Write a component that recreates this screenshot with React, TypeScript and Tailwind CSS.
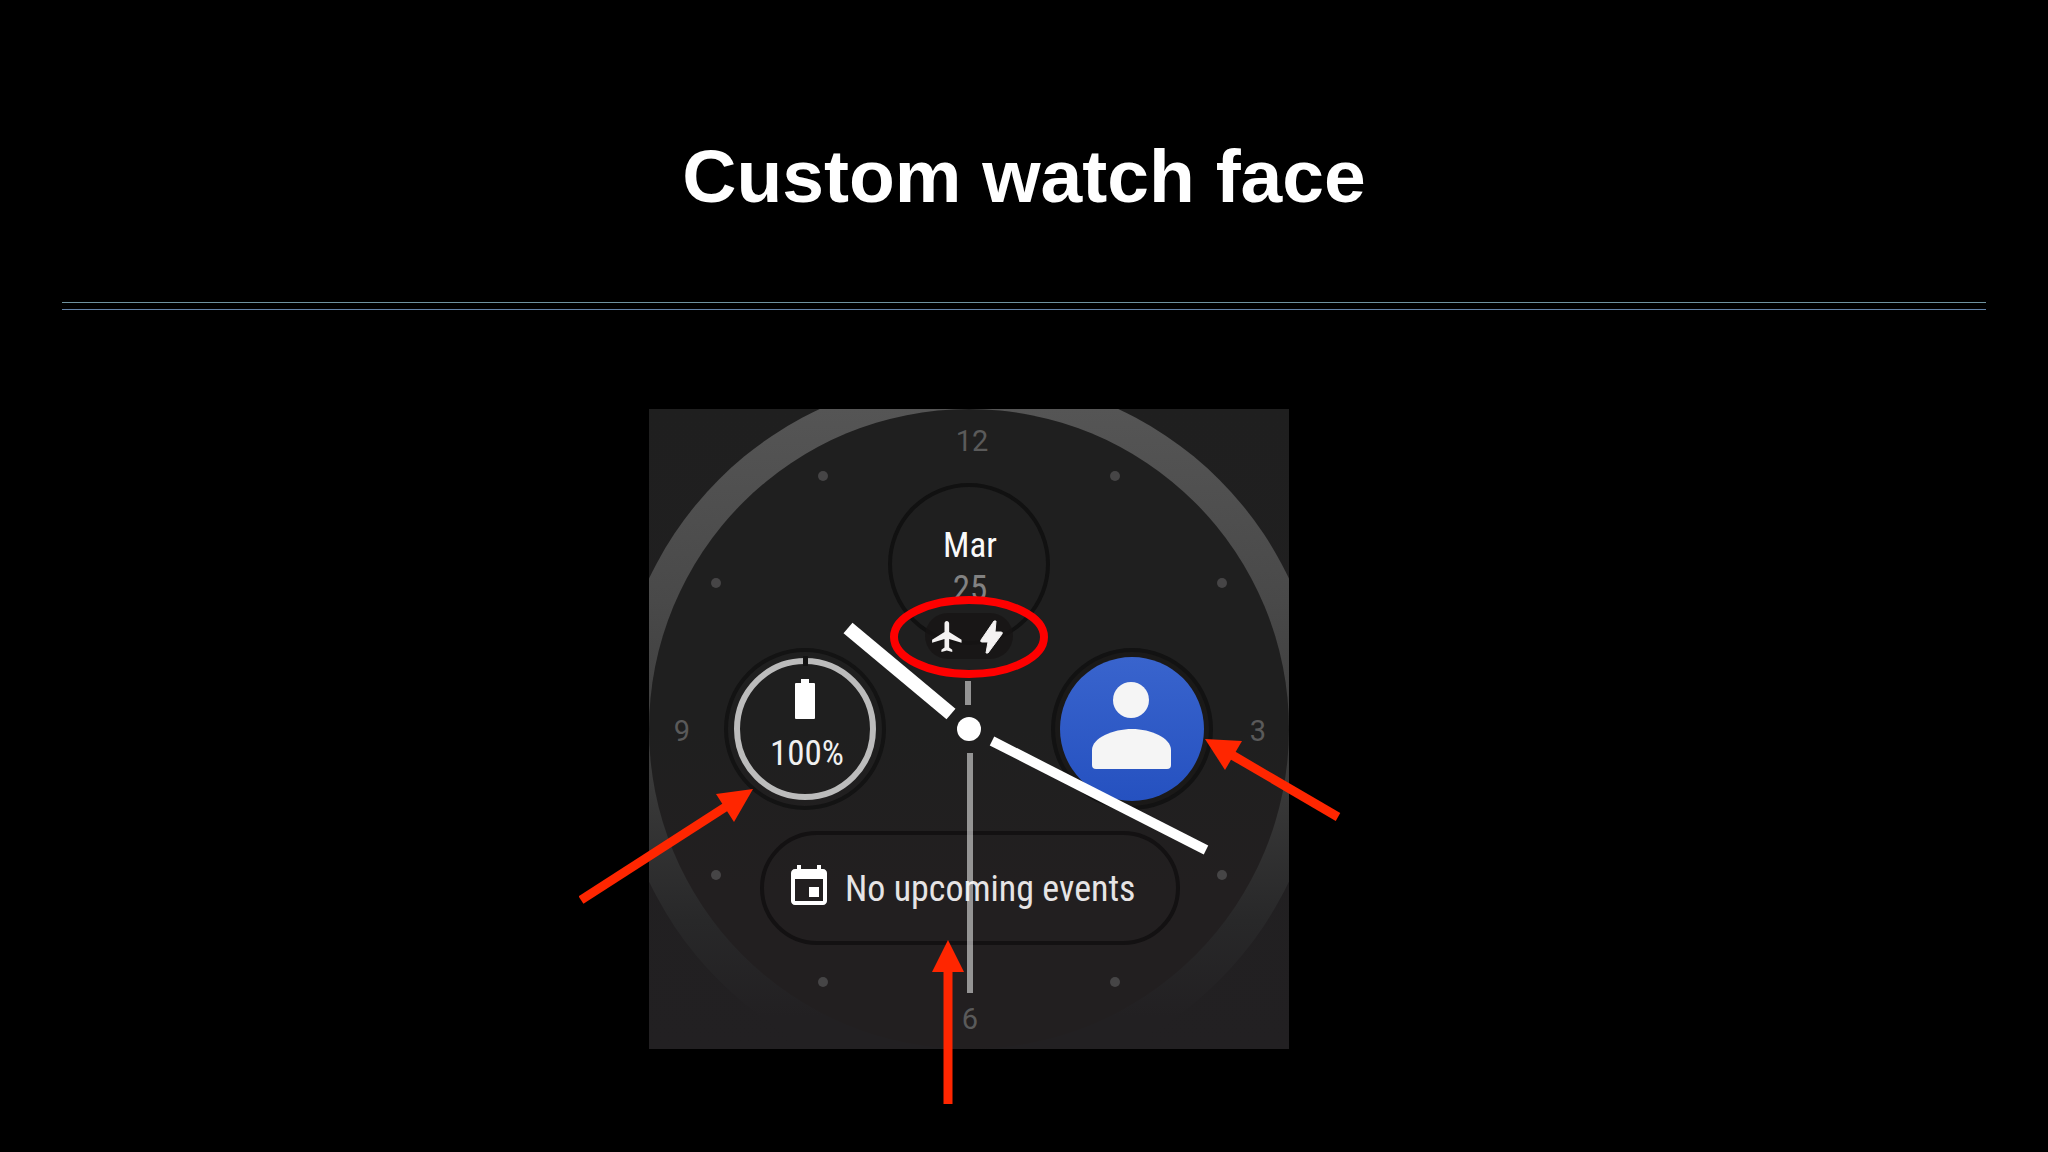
const HOUR_DOTS = [
  [466, 67],
  [573, 174],
  [573, 466],
  [466, 573],
  [174, 573],
  [67, 466],
  [67, 174],
  [174, 67],
];

const NUMERALS = [
  { label: '12', x: 323, y: 42 },
  { label: '3', x: 609, y: 332 },
  { label: '6', x: 321, y: 620 },
  { label: '9', x: 33, y: 332 },
];

const CONDENSED = "font-['Roboto_Condensed','Liberation_Sans_Narrow','Roboto',sans-serif]";

function Dial() {
  return (
    <g>
      <rect width="640" height="640" fill="url(#panel)" />
      <g clipPath="url(#frame)">
        <circle cx="320" cy="321" r="354" fill="url(#bezel)" />
        <circle cx="320" cy="320" r="320" fill="url(#dial)" />
      </g>
      {HOUR_DOTS.map(([x, y]) => (
        <circle key={`${x}-${y}`} cx={x} cy={y} r="5" fill="#464546" />
      ))}
      {NUMERALS.map((n) => (
        <text
          key={n.label}
          x={n.x}
          y={n.y}
          textAnchor="middle"
          className="fill-[#5a5a5a] font-['Roboto',sans-serif] text-[29px]"
        >
          {n.label}
        </text>
      ))}
    </g>
  );
}

function DateComplication() {
  return (
    <g>
      <circle cx="320" cy="155" r="79" fill="none" stroke="#111111" strokeWidth="4" />
      <text x="321" y="148" textAnchor="middle" className={`fill-[#fafafa] text-[35px] ${CONDENSED}`}>
        Mar
      </text>
      <text x="321" y="191" textAnchor="middle" className={`fill-[#828282] text-[35px] ${CONDENSED}`}>
        25
      </text>
    </g>
  );
}

function BatteryComplication() {
  return (
    <g>
      <circle cx="156" cy="320" r="79" fill="none" stroke="#131313" strokeWidth="4" />
      <circle cx="156" cy="320" r="68" fill="none" stroke="#bcbcbc" strokeWidth="6" />
      <rect x="154" y="247" width="5" height="10" fill="#131313" />
      <path d="M152 270h8v4h5q1 0 1 1v34q0 1-1 1h-18q-1 0-1-1v-34q0-1 1-1h5z" fill="#ffffff" />
      <text x="158" y="356" textAnchor="middle" className={`fill-[#f0f0f0] text-[35px] ${CONDENSED}`}>
        100%
      </text>
    </g>
  );
}

function ContactComplication() {
  return (
    <g>
      <circle cx="483" cy="320" r="79" fill="#1a1918" stroke="#121212" strokeWidth="4" />
      <circle cx="483" cy="320" r="72" fill="url(#contact)" />
      <g fill="#f5f5f5">
        <circle cx="482" cy="291" r="18" />
        <path d="M443 356V341C443 329 464 320 483 320S522 329 522 341V356q0 4-4 4H447q-4 0-4-4z" />
      </g>
    </g>
  );
}

function EventsComplication() {
  return (
    <g>
      <rect x="113" y="424" width="416" height="110" rx="55" fill="none" stroke="#131112" strokeWidth="4" />
      <path
        transform="translate(136 454) scale(2)"
        fill="#ffffff"
        d="M17 12h-5v5h5v-5zM16 1v2H8V1H6v2H5c-1.11 0-1.99.9-1.99 2L3 19c0 1.1.89 2 2 2h14c1.1 0 2-.9 2-2V5c0-1.1-.9-2-2-2h-1V1h-2zm3 18H5V8h14v11z"
      />
      <text x="196" y="492" className={`fill-[#e6e4e5] text-[36px] ${CONDENSED}`}>
        No upcoming events
      </text>
    </g>
  );
}

function StatusIcons() {
  return (
    <g>
      <rect x="276" y="204" width="88" height="46" rx="23" fill="#171414" opacity="0.8" />
      <g fill="#f4f2f2">
        <path
          transform="translate(280 209) scale(1.55)"
          d="M21 16v-2l-8-5V3.500c0-.83-.67-1.500-1.500-1.500S10 2.670 10 3.500V9l-8 5v2l8-2.500V19l-2 1.500V22l3.500-1 3.500 1v-1.500L13 19v-5.500l8 2.500z"
        />
        <path d="M345 212L332 231q-1 2 1 2h6l-2 11h2l14-19q1-2-1-2h-6l1-11z" stroke="#f4f2f2" strokeWidth="1" />
      </g>
    </g>
  );
}

function Hands() {
  return (
    <g>
      <g stroke="#ffffff" strokeWidth="6" opacity="0.52">
        <path d="M319 272V296" />
        <path d="M321 344V584" />
      </g>
      <g stroke="#ffffff">
        <path d="M199 219L302 305" strokeWidth="14" />
        <path d="M343 332L557 441" strokeWidth="10" />
      </g>
      <circle cx="320" cy="320" r="12" fill="#ffffff" />
    </g>
  );
}

function Callouts() {
  return (
    <g>
      <ellipse cx="320" cy="228" rx="75" ry="37" fill="none" stroke="#fe0000" strokeWidth="8" />
      <g stroke="#ff2600" strokeWidth="9">
        <path d="M-68 491L78 397" />
        <path d="M689 408L583 346" />
        <path d="M299 695V562" />
      </g>
      <g fill="#ff2600">
        <path d="M104 380L67 385L85 413z" />
        <path d="M556 330L593 332L576 361z" />
        <path d="M299 531L283 563H315z" />
      </g>
    </g>
  );
}

function WatchFace() {
  return (
    <svg
      viewBox="-70 0 762 696"
      role="img"
      aria-label="Watch face with complications"
      className="h-auto w-full max-w-[762px]"
    >
      <defs>
        <clipPath id="frame">
          <rect width="640" height="640" />
        </clipPath>
        <linearGradient id="panel" x1="0" y1="0" x2="0" y2="1">
          <stop offset="0" stopColor="#1f1f1f" />
          <stop offset="1" stopColor="#222022" />
        </linearGradient>
        <linearGradient id="dial" x1="0" y1="0" x2="0" y2="1">
          <stop offset="0.5" stopColor="#1f1f1f" />
          <stop offset="0.75" stopColor="#221f20" />
          <stop offset="1" stopColor="#221f20" />
        </linearGradient>
        <linearGradient id="bezel" gradientUnits="userSpaceOnUse" x1="0" y1="0" x2="0" y2="640">
          <stop offset="0" stopColor="#555555" />
          <stop offset="0.3" stopColor="#494949" />
          <stop offset="0.6" stopColor="#383838" />
          <stop offset="0.8" stopColor="#282829" />
          <stop offset="0.95" stopColor="#222022" />
        </linearGradient>
        <linearGradient id="contact" x1="0" y1="0" x2="0" y2="1">
          <stop offset="0" stopColor="#3964cd" />
          <stop offset="1" stopColor="#2551c0" />
        </linearGradient>
      </defs>
      <Dial />
      <DateComplication />
      <BatteryComplication />
      <ContactComplication />
      <EventsComplication />
      <StatusIcons />
      <Hands />
      <Callouts />
    </svg>
  );
}

export default function App() {
  return (
    <main className="flex min-h-screen flex-col bg-black px-[62px] pb-12 text-white">
      <header className="pt-32">
        <h1 className="text-center font-['Liberation_Sans',Arial,sans-serif] text-[75px] leading-[96px] font-bold">
          Custom watch face
        </h1>
        <div className="mt-[78px] h-2 border-t border-b border-t-[#6f929f] border-b-[#6483a8]" />
      </header>
      <section className="mt-[99px] flex justify-center pr-32">
        <WatchFace />
      </section>
    </main>
  );
}
